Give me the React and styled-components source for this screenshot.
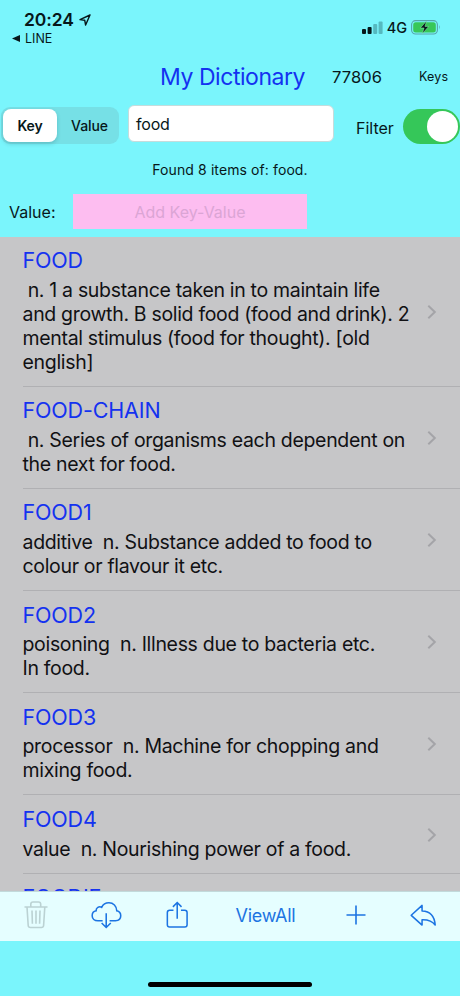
import React from 'react';
import styled, { createGlobalStyle } from 'styled-components';

const entries = [
  {
    key: 'FOOD',
    lines: [
      ' n. 1 a substance taken in to maintain life',
      'and growth. B solid food (food and drink). 2',
      'mental stimulus (food for thought). [old',
      'english]',
    ],
  },
  { key: 'FOOD-CHAIN', lines: [' n. Series of organisms each dependent on', 'the next for food.'] },
  { key: 'FOOD1', lines: ['additive  n. Substance added to food to', 'colour or flavour it etc.'] },
  { key: 'FOOD2', lines: ['poisoning  n. Illness due to bacteria etc.', 'In food.'] },
  { key: 'FOOD3', lines: ['processor  n. Machine for chopping and', 'mixing food.'] },
  { key: 'FOOD4', lines: ['value  n. Nourishing power of a food.'] },
  { key: 'FOODIE', lines: [] },
];

const StatusBar = () => (
  <Status>
    <StatusLeft>
      <Clock>
        20:24
        <svg width="12" height="12" viewBox="0 0 12 12" fill="none" stroke="#07171a" strokeWidth="1.4" strokeLinejoin="round">
          <path d="M11 1 L1 5.6 L5.7 6.2 L6.6 11 Z" />
        </svg>
      </Clock>
      <BackApp>
        <svg width="8" height="7" viewBox="0 0 8 7"><path d="M0 3.5 L8 0 V7 Z" fill="#07171a" /></svg>
        LINE
      </BackApp>
    </StatusLeft>
    <StatusRight>
      <svg width="21" height="13" viewBox="0 0 21 13">
        <rect x="0" y="8" width="4" height="5" rx="1" fill="#07171a" />
        <rect x="5.6" y="6" width="4" height="7" rx="1" fill="#07171a" />
        <rect x="11.2" y="3" width="4" height="10" rx="1" fill="#55b9c0" />
        <rect x="16.6" y="0.5" width="4" height="12.5" rx="1" fill="#55b9c0" />
      </svg>
      <Network>4G</Network>
      <svg width="30" height="15" viewBox="0 0 30 15">
        <rect x="0.6" y="0.6" width="25.8" height="13.4" rx="4" fill="none" stroke="#55a5aa" strokeWidth="1.1" />
        <rect x="2.2" y="2.2" width="22.6" height="10.2" rx="2.5" fill="#38c759" />
        <path d="M28 5 q1.6 2.3 0 4.6 z" fill="#55a5aa" />
        <path d="M15.5 1 L9.3 8 H13 L11.4 13.6 L17.7 6.4 H14 Z" fill="#07171a" stroke="#8ff0b5" strokeWidth="0.5" />
      </svg>
    </StatusRight>
  </Status>
);

const Row = ({ entry }) => (
  <Entry>
    <EntryBody>
      <EntryKey>{entry.key}</EntryKey>
      {entry.lines.map((line) => (
        <Line key={line}>{line}</Line>
      ))}
    </EntryBody>
    <Chevron width="10" height="16" viewBox="0 0 10 16">
      <path d="M1.3 1.8 L7.8 8 L1.3 14.2" />
    </Chevron>
  </Entry>
);

const App = () => (
  <>
    <GlobalStyle />
    <Screen>
      <StatusBar />
      <TitleBar>
        <Title>My Dictionary</Title>
        <Count>77806</Count>
        <KeysLabel>Keys</KeysLabel>
      </TitleBar>
      <SearchRow>
        <Segmented>
          <Segment $active>Key</Segment>
          <Segment>Value</Segment>
        </Segmented>
        <SearchField>food</SearchField>
        <FilterLabel>Filter</FilterLabel>
        <Switch><Knob /></Switch>
      </SearchRow>
      <Found>Found 8 items of: food.</Found>
      <ValueRow>
        <ValueLabel>Value:</ValueLabel>
        <AddField>Add Key-Value</AddField>
      </ValueRow>
      <List>
        {entries.map((entry) => <Row key={entry.key} entry={entry} />)}
      </List>
      <Toolbar>
        <Tool $disabled>
          <svg width="24" height="28" viewBox="0 0 24 28">
            <path d="M0.5 6 H23.5 M6.8 6 V3.2 Q6.8 1 9 1 H14.5 Q16.7 1 16.7 3.2 V6 M3 6 L4.2 24.5 Q4.4 26.5 6.4 26.5 H17.4 Q19.4 26.5 19.6 24.5 L20.8 6 M8 9.5 L8.4 22.8 M12 9.5 V22.8 M16 9.5 L15.6 22.8" />
          </svg>
        </Tool>
        <Tool>
          <svg width="31" height="28" viewBox="0 0 32 28">
            <path d="M12 20 H7.2 C3.6 20 1.2 17.8 1.2 14.8 C1.2 12 3 10 5.3 9.6 C5.1 6.6 8.3 4.6 11 6.1 C12.4 3 15.3 1.3 18.5 1.3 C23 1.3 26.5 4.7 26.6 9.7 C29 10.2 30.7 12.3 30.7 14.9 C30.7 17.9 28.5 20 25.2 20 H19.2 M15.7 12.2 V26.8 M11 22.2 L15.7 26.9 L20.4 22.2" />
          </svg>
        </Tool>
        <Tool>
          <svg width="23" height="28" viewBox="0 0 24 29">
            <path d="M7.8 9.6 H3.8 Q1.4 9.6 1.4 12 V24.6 Q1.4 27 3.8 27 H19.6 Q22 27 22 24.6 V12 Q22 9.6 19.6 9.6 H15.6 M11.7 18.5 V1.7 M7.2 6 L11.7 1.5 L16.2 6" />
          </svg>
        </Tool>
        <ViewAll>ViewAll</ViewAll>
        <Tool>
          <svg width="20" height="20" viewBox="0 0 20 20"><path d="M10 0.5 V19.5 M0.5 10 H19.5" /></svg>
        </Tool>
        <Tool>
          <svg width="27" height="23" viewBox="0 0 28 24">
            <path d="M1.2 11.8 L12.5 1.5 V7.3 C20.5 7.6 25.5 12 26.2 22 C23 17.6 19 16.3 12.5 16.5 V22 Z" strokeLinejoin="round" />
          </svg>
        </Tool>
      </Toolbar>
      <HomeArea><HomeIndicator /></HomeArea>
    </Screen>
  </>
);

export default App;

const GlobalStyle = createGlobalStyle`
  * {
    box-sizing: border-box;
  }

  body {
    margin: 0;
    font-family: Inter, "Liberation Sans", sans-serif;
    color: #07171a;
  }

  svg {
    display: block;
    flex: none;
  }
`;

const Screen = styled.div`
  display: flex;
  flex-direction: column;
  width: 460px;
  height: 996px;
  overflow: hidden;
  background: #7af5fc;
`;

const Status = styled.header`
  display: flex;
  justify-content: space-between;
  height: 56px;
  padding: 9px 19px 0 12px;
`;

const StatusLeft = styled.div`
  display: flex;
  flex-direction: column;
`;

const Clock = styled.div`
  display: flex;
  align-items: center;
  gap: 5px;
  padding-left: 12px;
  font-size: 17.5px;
  font-weight: 600;
  letter-spacing: -0.1px;
  line-height: 21px;
`;

const BackApp = styled.div`
  display: flex;
  align-items: center;
  gap: 5px;
  font-size: 12.5px;
  line-height: 17px;
`;

const StatusRight = styled.div`
  display: flex;
  align-items: center;
  height: 19px;
  margin-top: 9px;
`;

const Network = styled.span`
  margin: 0 4px 0 4px;
  font-size: 14.5px;
  font-weight: 500;
`;

const TitleBar = styled.div`
  display: flex;
  align-items: center;
  height: 41px;
  padding-left: 160px;
`;

const Title = styled.h1`
  width: 172px;
  margin: 0;
  font-size: 23px;
  font-weight: 400;
  letter-spacing: -0.45px;
  color: #1432f0;
`;

const Count = styled.span`
  width: 87px;
  font-size: 16.5px;
  letter-spacing: 0.1px;
`;

const KeysLabel = styled.span`
  font-size: 12.5px;
  letter-spacing: 0.2px;
`;

const SearchRow = styled.div`
  display: flex;
  align-items: center;
  height: 57px;
  padding: 0 0 2px 1px;
`;

const Segmented = styled.div`
  display: flex;
  width: 118px;
  height: 37px;
  padding: 2px;
  margin-top: 1px;
  border-radius: 9px;
  background: #76e0e6;
`;

const Segment = styled.div`
  display: flex;
  flex: ${props => props.$active ? '0 0 54px' : '1'};
  align-items: center;
  justify-content: center;
  padding-left: ${props => props.$active ? '0' : '5px'};
  border-radius: 8px;
  font-size: 14px;
  font-weight: ${props => props.$active ? 600 : 500};
  letter-spacing: -0.1px;
  background: ${props => props.$active ? '#fff' : 'transparent'};
  box-shadow: ${props => props.$active ? '0 2px 4px rgba(0, 60, 70, .2)' : 'none'};
`;

const SearchField = styled.div`
  width: 206px;
  height: 37px;
  margin: -3px 0 0 9px;
  padding-left: 7px;
  border: 1px solid #c5dcdc;
  border-radius: 6px;
  background: #fff;
  font-size: 16px;
  letter-spacing: -0.2px;
  line-height: 37px;
`;

const FilterLabel = styled.span`
  width: 47px;
  margin: 6px 0 0 22px;
  font-size: 16px;
`;

const Switch = styled.div`
  display: flex;
  flex: none;
  justify-content: flex-end;
  width: 57px;
  height: 35px;
  margin-top: 4px;
  padding: 2px;
  border-radius: 18px;
  background: #35c759;
`;

const Knob = styled.div`
  width: 31px;
  height: 31px;
  border-radius: 50%;
  background: #fff;
`;

const Found = styled.div`
  height: 32px;
  text-align: center;
  font-size: 14px;
  letter-spacing: 0.1px;
  line-height: 32px;
`;

const ValueRow = styled.div`
  display: flex;
  height: 51px;
  padding: 8px 0 0 9px;
  line-height: 36px;
`;

const ValueLabel = styled.span`
  width: 64px;
  font-size: 16px;
`;

const AddField = styled.div`
  width: 234px;
  height: 35px;
  background: #fdbdf0;
  color: #dba5d5;
  text-align: center;
  font-size: 16px;
`;

const List = styled.main`
  height: 654px;
  overflow: hidden;
  background: #c6c6c8;
`;

const Entry = styled.section`
  display: flex;
  align-items: center;
  justify-content: space-between;
  margin-left: 22.5px;
  padding: 8.4px 23.5px 11.4px 0;
  border-bottom: 1px solid #b0b0b3;
`;

const EntryBody = styled.div`
  white-space: pre;
`;

const EntryKey = styled.h2`
  margin: 0 0 3.8px;
  font-size: 21.5px;
  font-weight: 400;
  letter-spacing: -0.15px;
  line-height: 30px;
  color: #1432f0;
`;

const Line = styled.div`
  font-size: 19.5px;
  letter-spacing: -0.32px;
  line-height: 23.8px;
  color: #111114;
`;

const Chevron = styled.svg`
  margin-top: 4px;
  fill: none;
  stroke: #a4a4a8;
  stroke-width: 2;
`;

const Toolbar = styled.nav`
  display: grid;
  grid-template-columns: 67px 75px 69.5px 110.5px 64px 28px;
  align-items: center;
  height: 50px;
  padding: 0 0 3px 24px;
  border-top: 1px solid #c2dadb;
  background: #e5feff;
`;

const Tool = styled.div`
  svg {
    fill: none;
    stroke: ${props => props.$disabled ? '#bbd2d3' : '#1c74e2'};
    stroke-width: 1.6;
  }
`;

const ViewAll = styled.span`
  font-size: 18px;
  letter-spacing: -0.25px;
  color: #1c74e2;
`;

const HomeArea = styled.footer`
  display: flex;
  flex: 1;
  align-items: flex-end;
  justify-content: center;
  padding-bottom: 9px;
`;

const HomeIndicator = styled.div`
  width: 164px;
  height: 5.5px;
  border-radius: 3px;
  background: #000;
`;
